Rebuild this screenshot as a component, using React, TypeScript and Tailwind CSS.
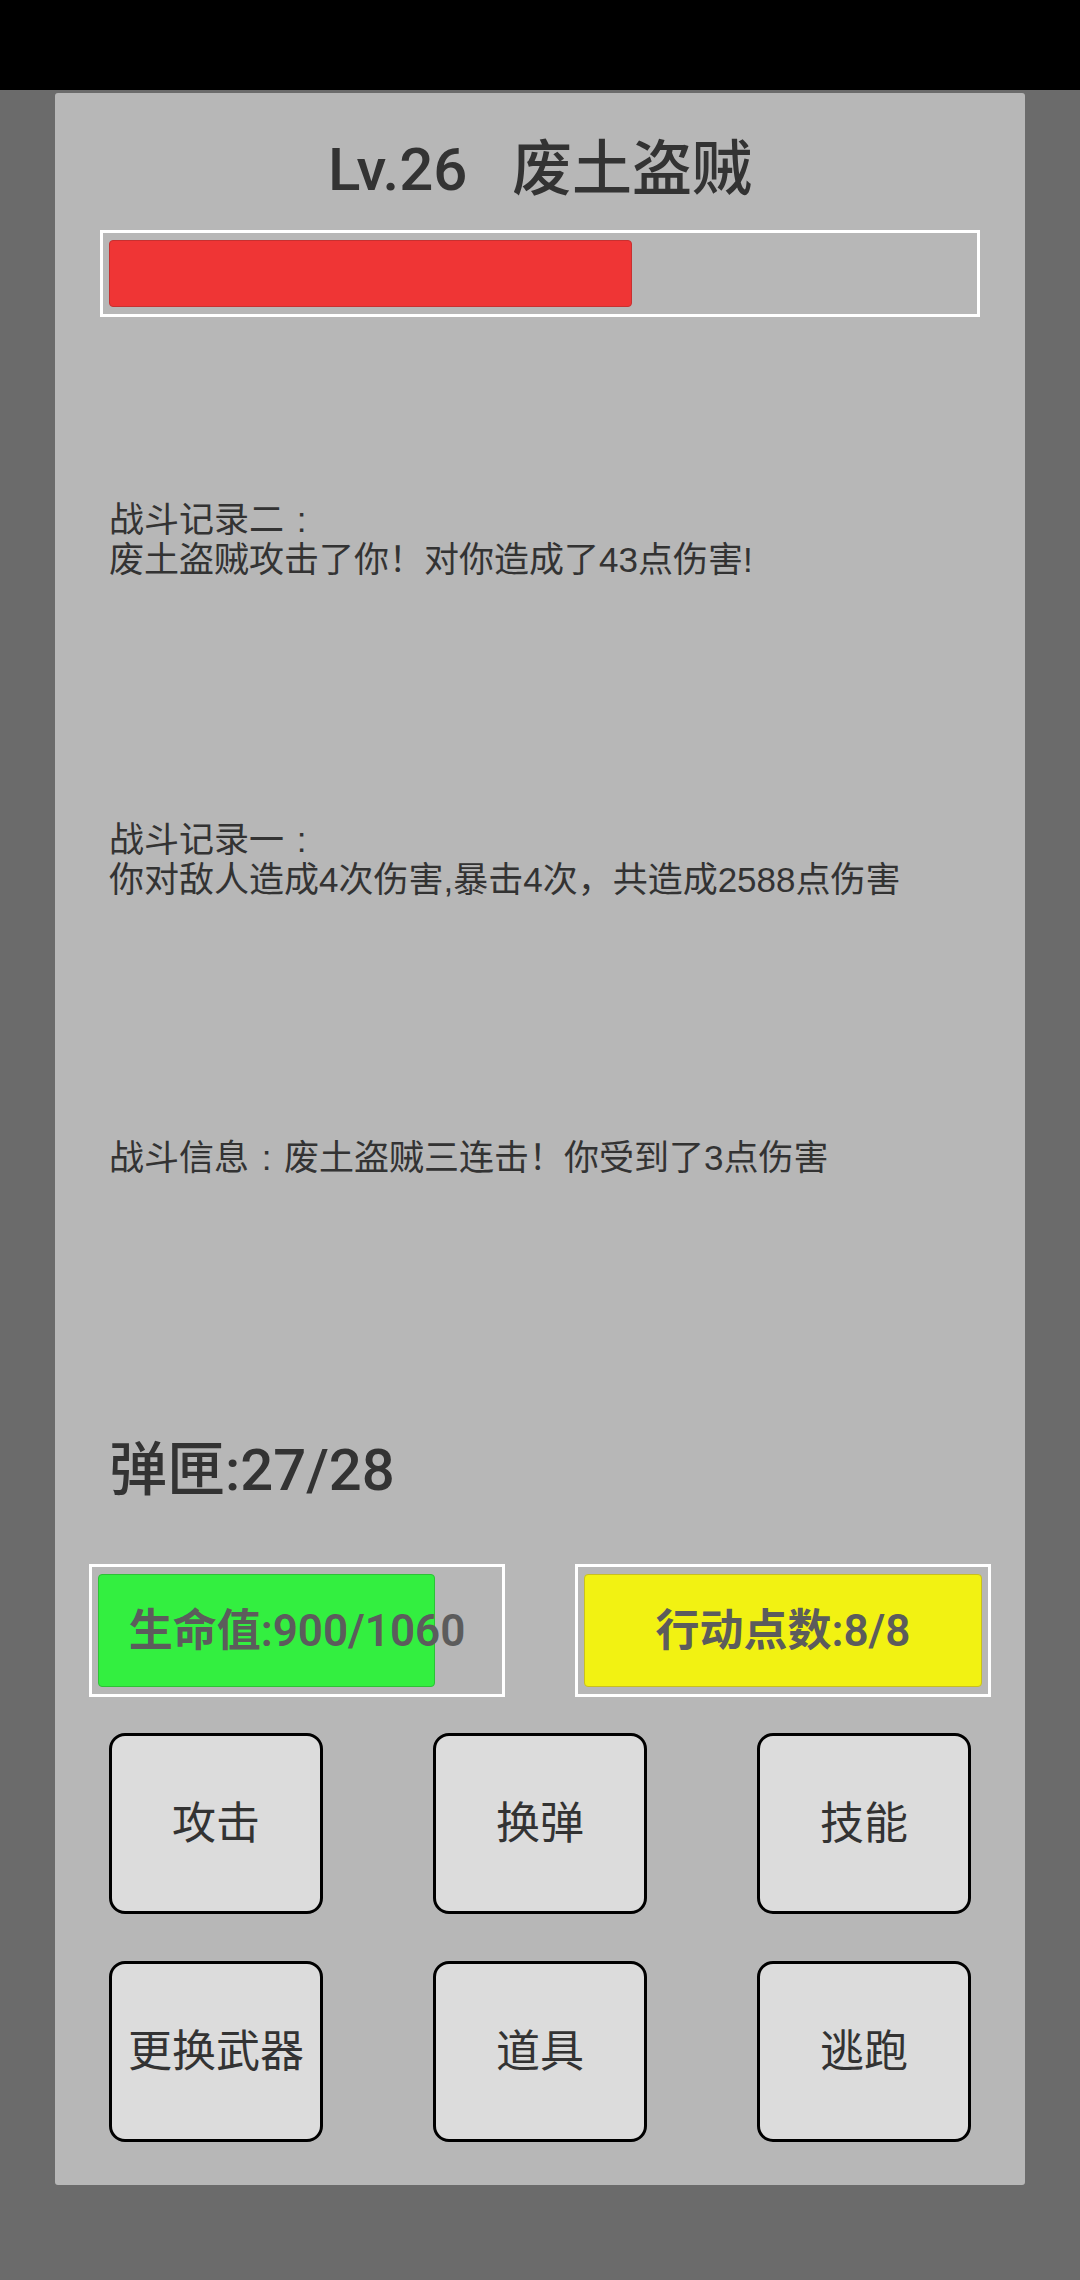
import React from "react";

const font = { fontFamily: '"Liberation Sans", "Noto Sans CJK SC", sans-serif' };
const heavy = { fontFamily: 'Roboto, "Noto Sans CJK SC", sans-serif' };

// colon sits centred in a full-width cell, as in the game font
function Colon() {
  return <span className="inline-block w-[1em] text-center">:</span>;
}

const actions = ["攻击", "换弹", "技能", "更换武器", "道具", "逃跑"];

function StatBox({ label, fill, color }: { label: string; fill: number; color: string }) {
  return (
    <div className="relative w-[416px] h-[133px] border-[3px] border-white px-[6px] py-[7px]">
      <div
        className={`h-full rounded-[4px] border ${color}`}
        style={{ width: `${fill * 100}%` }}
      />
      <div
        className="absolute inset-0 flex items-center justify-center text-[44px] font-semibold text-[#5c5c5c] leading-none"
        style={heavy}
      >
        {label}
      </div>
    </div>
  );
}

export default function App() {
  return (
    <div className="w-[1080px] min-h-[2280px] bg-[#6b6b6b] text-[#333333]" style={font}>
      <div className="h-[90px] bg-black" />
      <div className="mx-[55px] mt-[3px] h-[2092px] rounded-[3px] bg-[#b7b7b7] flex flex-col">
        <div className="pt-[42px] h-[112px] text-center text-[60px] leading-[70px] font-medium whitespace-pre" style={heavy}>
          {"Lv.26   废土盗贼"}
        </div>

        <div className="mt-[25px] ml-[45px] w-[880px] h-[87px] border-[3px] border-white px-[6px] py-[7px]">
          <div className="h-full w-[523px] rounded-[4px] bg-[#ef3535] border border-[#c83030]" />
        </div>

        <div className="ml-[54px] text-[35px] leading-[40px]">
          <div className="mt-[183px]">
            <div className="h-[40px]">战斗记录二<Colon /></div>
            <div className="h-[40px]">废土盗贼攻击了你！对你造成了43点伤害!</div>
          </div>
          <div className="mt-[240px]">
            <div className="h-[40px]">战斗记录一<Colon /></div>
            <div className="h-[40px]">你对敌人造成4次伤害,暴击4次，共造成2588点伤害</div>
          </div>
          <div className="mt-[238px] h-[40px]">战斗信息<Colon />废土盗贼三连击！你受到了3点伤害</div>
        </div>

        <div className="ml-[54px] mt-[257px] h-[70px] text-[58px] leading-[70px] font-medium" style={heavy}>弹匣:27/28</div>

        <div className="mt-[59px] px-[34px] flex justify-between">
          <StatBox label="生命值:900/1060" fill={0.847} color="bg-[#33ef40] border-[#2cc236]" />
          <StatBox label="行动点数:8/8" fill={1} color="bg-[#f2f212] border-[#c8bf20]" />
        </div>

        <div className="mt-[36px] px-[54px] grid gap-y-[47px] justify-between" style={{ gridTemplateColumns: "214px 214px 214px" }}>
          {actions.map((a) => (
            <button
              key={a}
              className="w-[214px] h-[181px] rounded-[16px] border-[3px] border-black bg-[#dcdcdc] text-[44px] text-[#333333] flex items-center justify-center"
            >
              {a}
            </button>
          ))}
        </div>
      </div>
    </div>
  );
}
